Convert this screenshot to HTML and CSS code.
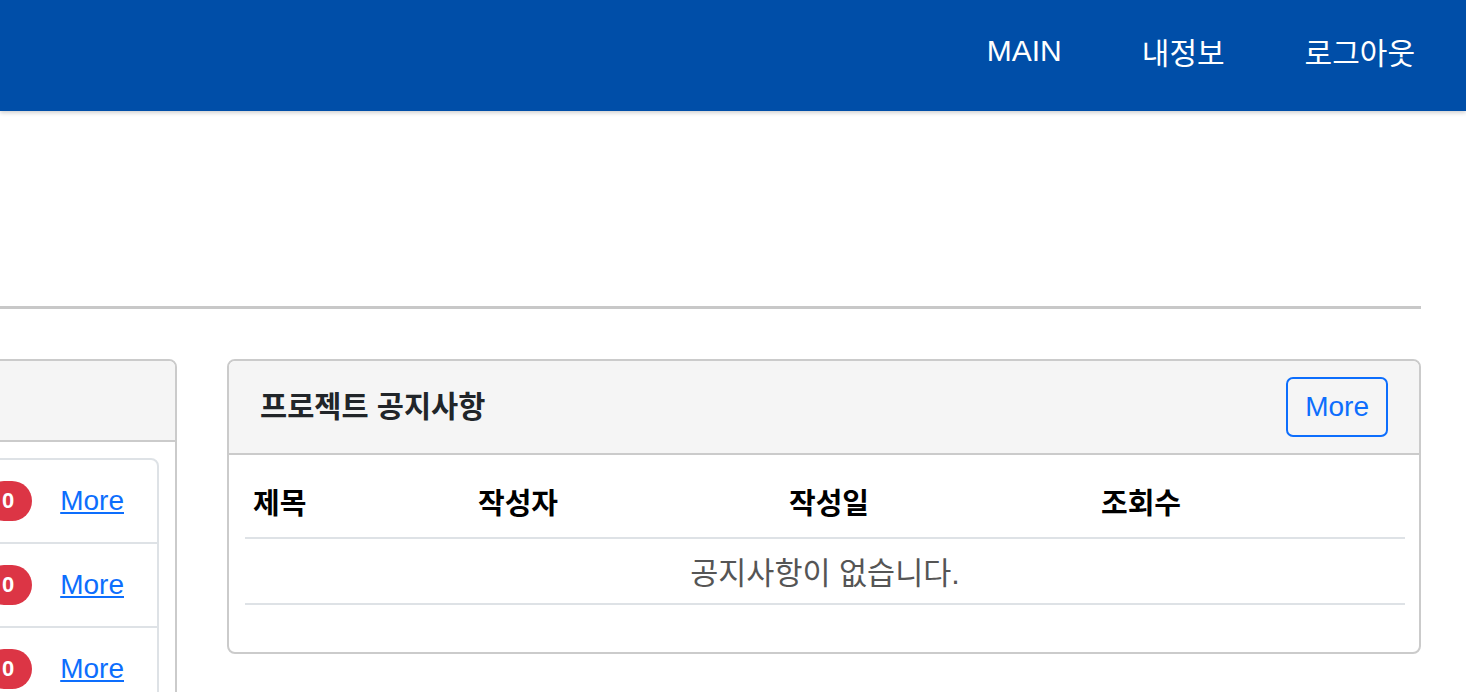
FILE: index.html
```html
<!DOCTYPE html>
<html lang="ko">
<head>
<meta charset="utf-8">
<title>프로젝트</title>
<link rel="stylesheet" href="styles.css">
</head>
<body>
<nav class="navbar">
  <a class="nav-link" href="#">MAIN</a>
  <a class="nav-link" href="#">내정보</a>
  <a class="nav-link" href="#">로그아웃</a>
</nav>
<main class="page">
  <div class="divider"></div>
  <div class="row">
    <section class="card card-left">
      <div class="card-header left-header">
        <h2 class="card-title">내 프로젝트</h2>
      </div>
      <div class="card-body">
        <ul class="list-group">
          <li class="list-item">
            <span class="item-name">프로젝트 A</span>
            <span class="item-actions"><span class="badge">0</span><a class="more-link" href="#">More</a></span>
          </li>
          <li class="list-item">
            <span class="item-name">프로젝트 B</span>
            <span class="item-actions"><span class="badge">0</span><a class="more-link" href="#">More</a></span>
          </li>
          <li class="list-item">
            <span class="item-name">프로젝트 C</span>
            <span class="item-actions"><span class="badge">0</span><a class="more-link" href="#">More</a></span>
          </li>
        </ul>
      </div>
    </section>
    <section class="card card-right">
      <div class="card-header">
        <h2 class="card-title">프로젝트 공지사항</h2>
        <a class="btn-outline" href="#">More</a>
      </div>
      <div class="card-body">
        <table class="table">
          <thead>
            <tr>
              <th class="col-title">제목</th>
              <th class="col-writer">작성자</th>
              <th class="col-date">작성일</th>
              <th class="col-views">조회수</th>
            </tr>
          </thead>
          <tbody>
            <tr>
              <td class="empty" colspan="4">공지사항이 없습니다.</td>
            </tr>
          </tbody>
        </table>
      </div>
    </section>
  </div>
</main>
</body>
</html>
```
FILE: styles.css
```css
* { box-sizing: border-box; }
html, body { margin: 0; padding: 0; }
body {
  font-family: "Liberation Sans", "Noto Sans CJK KR", sans-serif;
  color: #212529;
  background: #fff;
  overflow: hidden;
  width: 1466px;
  height: 692px;
}
.navbar {
  height: 111px;
  background: #004ea8;
  display: flex;
  justify-content: flex-end;
  align-items: center;
  gap: 80px;
  padding: 0 51px 10px 0;
  box-shadow: 0 2px 4px rgba(0, 0, 0, 0.18);
  position: relative;
  z-index: 1;
}
.nav-link {
  color: #fff;
  text-decoration: none;
  font-size: 30px;
}
.page {
  padding-right: 45px;
}
.divider {
  margin-top: 195px;
  height: 3px;
  background: #c8c8c8;
}
.row {
  display: flex;
  justify-content: flex-end;
  align-items: flex-start;
  gap: 50px;
  margin-top: 50px;
}
.card {
  flex: none;
  border: 2px solid #cbcbcb;
  border-radius: 8px;
  background: #fff;
  overflow: hidden;
}
.card-left { width: 700px; }
.card-right { width: 1194px; }
.card-header {
  background: #f5f5f5;
  border-bottom: 2px solid #cbcbcb;
  padding: 16px 31px;
  display: flex;
  justify-content: space-between;
  align-items: center;
}
.left-header {
  padding-top: 18px;
  padding-bottom: 19px;
}
.card-title {
  margin: 0;
  font-size: 29.5px;
  font-weight: 700;
  line-height: 42px;
  color: #212529;
}
.btn-outline {
  display: inline-block;
  color: #0d6efd;
  border: 2px solid #0d6efd;
  border-radius: 7px;
  padding: 7px 17px;
  font-size: 28px;
  line-height: 42px;
  text-decoration: none;
}
.card-body {
  padding: 16px;
}
.list-group {
  list-style: none;
  margin: 0;
  padding: 0;
  border: 2px solid #dee2e6;
  border-radius: 8px;
}
.list-item {
  display: flex;
  justify-content: space-between;
  align-items: center;
  padding: 20px 33px 20px 28px;
  font-size: 28px;
  line-height: 42px;
}
.list-item + .list-item {
  border-top: 2px solid #dee2e6;
}
.item-actions {
  display: flex;
  align-items: center;
  gap: 28px;
}
.badge {
  display: inline-block;
  background: #dc3545;
  color: #fff;
  font-weight: 700;
  font-size: 22px;
  height: 40px;
  line-height: 40px;
  padding: 0 18px;
  border-radius: 20px;
}
.more-link {
  color: #0d6efd;
  text-decoration: underline;
  font-size: 28px;
}
.table {
  width: 100%;
  border-collapse: collapse;
  table-layout: fixed;
  margin-bottom: 31px;
}
.table th {
  text-align: left;
  font-weight: 700;
  color: #000;
  font-size: 29px;
  line-height: 42px;
  padding: 12px 8px;
  border-bottom: 2px solid #dee2e6;
}
.col-title { width: 225px; }
.col-writer { width: 311px; }
.col-date { width: 312px; }
.col-views { width: 312px; }
.table td {
  font-size: 30.5px;
  line-height: 42px;
  padding: 13px 8px 9px;
  border-bottom: 2px solid #dee2e6;
}
.table td.empty {
  text-align: center;
  color: #555;
}
```
